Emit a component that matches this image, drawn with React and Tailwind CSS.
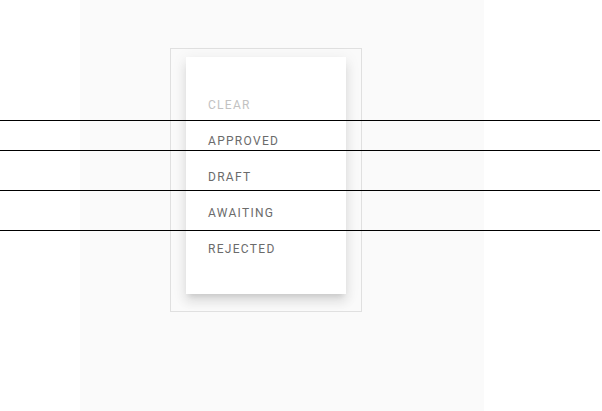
const items = [
  { label: "CLEAR", muted: true },
  { label: "APPROVED" },
  { label: "DRAFT" },
  { label: "AWAITING" },
  { label: "REJECTED" },
];

const lines = [120, 150, 190, 230];

export default function App() {
  return (
    <div className="relative h-[411px] w-[602px] bg-white" style={{ fontFamily: "Roboto, 'Liberation Sans', sans-serif" }}>
      <div className="ml-[80px] h-[411px] w-[404px] bg-[#fafafa] pt-[48px] pl-[90px]">
        {/* Menu frame */}
        <div className="h-[264px] w-[192px] border border-[#e0e0e0] pl-[15px] pt-[8px]">
          <div className="h-[237px] w-[160px] bg-white pt-[30px] pb-[28px] shadow-[0_5px_5px_-3px_rgba(0,0,0,0.1),0_8px_10px_1px_rgba(0,0,0,0.07),0_3px_14px_2px_rgba(0,0,0,0.06)]">
            <ul>
              {items.map((it) => (
                <li
                  key={it.label}
                  className={`flex h-[36px] items-center px-[22px] text-[12px] tracking-[1.3px] ${
                    it.muted ? "text-[#c2c2c2]" : "text-[#6b6b6b]"
                  }`}
                >
                  {it.label}
                </li>
              ))}
            </ul>
          </div>
        </div>
      </div>

      {/* Guide lines over the page */}
      {lines.map((y) => (
        <div key={y} className="absolute left-0 h-px w-[600px] bg-black" style={{ top: y }} />
      ))}
    </div>
  );
}
